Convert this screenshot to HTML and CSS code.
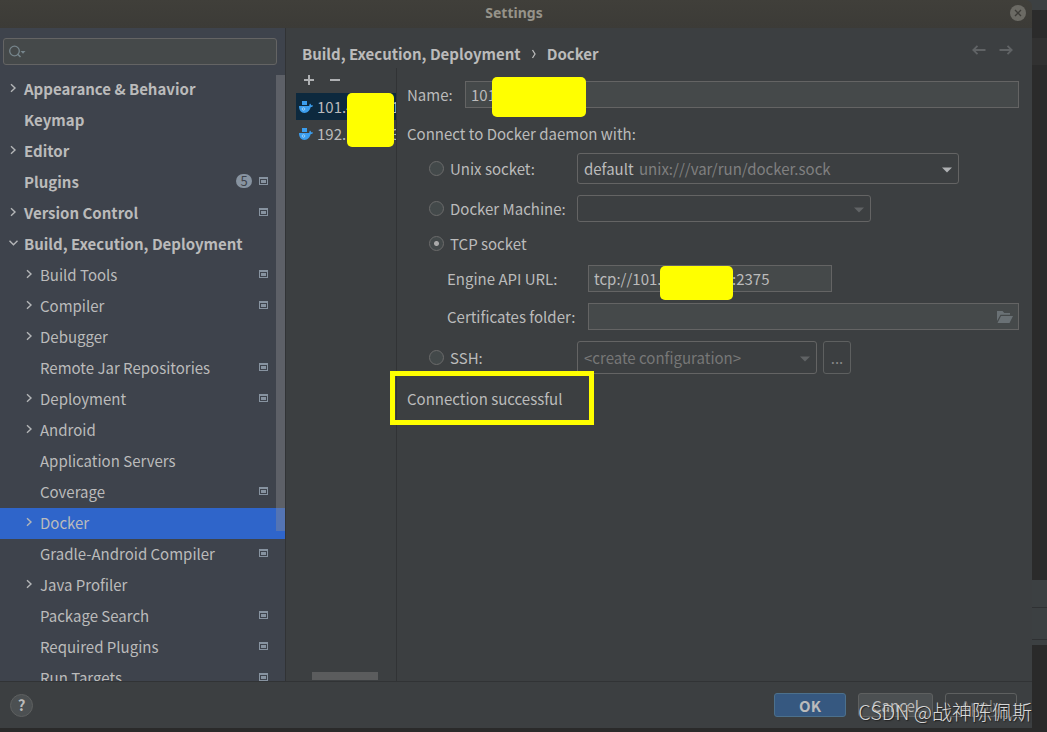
FILE: index.html
```html
<!DOCTYPE html>
<html lang="en">
<head>
<meta charset="utf-8">
<title>Settings</title>
<link rel="stylesheet" href="styles.css">
</head>
<body>
<svg class="defs" aria-hidden="true">
  <symbol id="right" viewBox="0 0 10 10"><path d="M3 1.200 7 5 3 8.800" fill="none" stroke="#b4b6b8" stroke-width="1.400"/></symbol>
  <symbol id="down" viewBox="0 0 10 10"><path d="M1.500 2.800 5.500 6.800 9.500 2.800" fill="none" stroke="#b4b6b8" stroke-width="1.400"/></symbol>
  <symbol id="project" viewBox="0 0 9 8"><path fill="#8793a0" fill-rule="evenodd" d="M0 0h9v8H0zM1 2v5h7V2z"/><path fill="#8793a0" d="M2 3h5v3H2z"/></symbol>
  <symbol id="whale" viewBox="0 0 16 14"><path fill="#3b9ded" d="M4 1h5v4H4zM1 6h10.200c0-1 .2-1.800.8-2.500.7.5 1.100 1.200 1.200 1.900.7-.1 1.300 0 1.800.4-.5 1-1.300 1.400-2.400 1.500C11.800 10.600 9.500 13 6.500 13 3 13 1 10 1 6z"/><circle cx="5.500" cy="9" r="1.300" fill="none" stroke="#b9def8" stroke-width=".7"/></symbol>
</svg>
<main class="dialog">
  <header class="titlebar">
    <h1>Settings</h1>
    <button class="close" aria-label="Close"><svg viewBox="0 0 16 16"><path d="M5 5l6 6M11 5l-6 6" stroke="#3c3b37" stroke-width="1.300"/></svg></button>
  </header>
  <div class="body">
    <nav class="sidebar" aria-label="Settings categories">
      <div class="search">
        <svg viewBox="0 0 18 14" aria-hidden="true"><circle cx="5.500" cy="6" r="4.800" fill="none" stroke="#76858c" stroke-width="1.300"/><path d="M8.500 9l3 3" stroke="#76858c" stroke-width="1.600"/><path d="M11.500 6h5L14 8.700z" fill="#76858c"/></svg>
        <input type="search" aria-label="Search settings">
      </div>
      <ul class="tree">
        <li class="top"><svg class="arrow"><use href="#right"/></svg><a href="#">Appearance &amp; Behavior</a></li>
        <li class="top"><span class="arrow"></span><a href="#">Keymap</a></li>
        <li class="top"><svg class="arrow"><use href="#right"/></svg><a href="#">Editor</a></li>
        <li class="top"><span class="arrow"></span><a href="#">Plugins</a><span class="count">5</span><svg class="project"><use href="#project"/></svg></li>
        <li class="top"><svg class="arrow"><use href="#right"/></svg><a href="#">Version Control</a><svg class="project"><use href="#project"/></svg></li>
        <li class="top"><svg class="arrow"><use href="#down"/></svg><a href="#">Build, Execution, Deployment</a></li>
        <li><svg class="arrow"><use href="#right"/></svg><a href="#">Build Tools</a><svg class="project"><use href="#project"/></svg></li>
        <li><svg class="arrow"><use href="#right"/></svg><a href="#">Compiler</a><svg class="project"><use href="#project"/></svg></li>
        <li><svg class="arrow"><use href="#right"/></svg><a href="#">Debugger</a></li>
        <li><span class="arrow"></span><a href="#">Remote Jar Repositories</a><svg class="project"><use href="#project"/></svg></li>
        <li><svg class="arrow"><use href="#right"/></svg><a href="#">Deployment</a><svg class="project"><use href="#project"/></svg></li>
        <li><svg class="arrow"><use href="#right"/></svg><a href="#">Android</a></li>
        <li><span class="arrow"></span><a href="#">Application Servers</a></li>
        <li><span class="arrow"></span><a href="#">Coverage</a><svg class="project"><use href="#project"/></svg></li>
        <li class="selected"><svg class="arrow"><use href="#right"/></svg><a href="#">Docker</a></li>
        <li><span class="arrow"></span><a href="#">Gradle-Android Compiler</a><svg class="project"><use href="#project"/></svg></li>
        <li><svg class="arrow"><use href="#right"/></svg><a href="#">Java Profiler</a></li>
        <li><span class="arrow"></span><a href="#">Package Search</a><svg class="project"><use href="#project"/></svg></li>
        <li><span class="arrow"></span><a href="#">Required Plugins</a><svg class="project"><use href="#project"/></svg></li>
        <li><span class="arrow"></span><a href="#">Run Targets</a><svg class="project"><use href="#project"/></svg></li>
      </ul>
      <span class="scroll-v"></span>
    </nav>
    <section class="content">
      <div class="crumbs">
        <h2>Build, Execution, Deployment</h2>
        <svg class="sep" viewBox="0 0 6 10"><path d="M1.500 1 4 5 1.500 9" fill="none" stroke="#bbb" stroke-width="1.300"/></svg>
        <h2>Docker</h2>
        <div class="history">
          <button aria-label="Back"><svg viewBox="0 0 14 10"><path d="M13.500 5H1.500M5.500 .8 1.300 5l4.200 4.200" fill="none" stroke="#606365" stroke-width="1.800"/></svg></button>
          <button aria-label="Forward"><svg viewBox="0 0 14 10"><path d="M.5 5h12M8.500.8 12.700 5 8.500 9.200" fill="none" stroke="#606365" stroke-width="1.800"/></svg></button>
        </div>
      </div>
      <div class="panes">
        <div class="servers">
          <div class="tools">
            <button aria-label="Add"><svg viewBox="0 0 10 10"><path d="M5 0v10M0 5h10" stroke="#afb1b3" stroke-width="2"/></svg></button>
            <button aria-label="Remove"><svg viewBox="0 0 10 10"><path d="M0 5h10" stroke="#afb1b3" stroke-width="2"/></svg></button>
          </div>
          <ul class="server-list">
            <li class="active"><svg class="whale"><use href="#whale"/></svg><span>101.4           1</span></li>
            <li><svg class="whale"><use href="#whale"/></svg><span>192.1           3</span></li>
            <li class="mask mask-list"></li>
          </ul>
          <span class="scroll-h"></span>
        </div>
        <form class="form">
          <div class="row name-row">
            <label for="name">Name:</label>
            <div class="field grow"><input id="name" type="text" value="101"><span class="mask mask-name"></span></div>
          </div>
          <p class="lead">Connect to Docker daemon with:</p>
          <div class="options">
            <div class="row">
              <label class="choice"><input type="radio" name="mode">Unix socket:</label>
              <div class="combo unix"><select aria-label="Unix socket"><option>default</option></select><span class="hint">unix:///var/run/docker.sock</span><svg class="caret" viewBox="0 0 10 6"><path d="M0 .5h10L5 5.500z" fill="#afb1b3"/></svg></div>
            </div>
            <div class="row">
              <label class="choice"><input type="radio" name="mode">Docker Machine:</label>
              <div class="combo machine off"><select aria-label="Docker Machine" disabled><option></option></select><svg class="caret" viewBox="0 0 10 6"><path d="M0 .5h10L5 5.500z" fill="#606365"/></svg></div>
            </div>
            <label class="choice tcp"><input type="radio" name="mode" checked>TCP socket</label>
            <div class="row sub">
              <label for="url">Engine API URL:</label>
              <div class="field url"><input id="url" type="text" value="tcp://101.&nbsp;&nbsp;&nbsp;&nbsp;&nbsp;&nbsp;&nbsp;&nbsp;&nbsp;&nbsp;&nbsp;&nbsp;&nbsp;&nbsp;&nbsp;&nbsp;&nbsp;&nbsp;&nbsp;&nbsp;&nbsp;:2375"><span class="mask mask-url"></span></div>
            </div>
            <div class="row sub">
              <label for="cert">Certificates folder:</label>
              <div class="field grow"><input id="cert" type="text"><button class="browse" type="button" aria-label="Browse"><svg viewBox="0 0 16 12"><path fill="#6a7175" d="M0 0h5.500l1.800 2H13v1.800H3.500L0 10z"/><path fill="#6a7175" d="M4 5h12l-3.500 7H.5z"/></svg></button></div>
            </div>
            <div class="row">
              <label class="choice"><input type="radio" name="mode">SSH:</label>
              <div class="combo ssh off"><select aria-label="SSH configuration" disabled><option>&lt;create configuration&gt;</option></select><svg class="caret" viewBox="0 0 10 6"><path d="M0 .5h10L5 5.500z" fill="#606365"/></svg></div>
              <button class="more" type="button">...</button>
            </div>
          </div>
          <p class="status">Connection successful<span class="frame"></span></p>
        </form>
      </div>
    </section>
  </div>
  <footer class="footer">
    <button class="help" aria-label="Help">?</button>
    <button class="btn primary">OK</button>
    <button class="btn cancel">Cancel</button>
    <button class="btn apply" disabled>Apply</button>
  </footer>
</main>
<div class="watermark">CSDN @战神陈佩斯</div>
</body>
</html>
```

FILE: styles.css
```css
* { box-sizing: border-box; margin: 0; padding: 0; }
body {
  height: 100vh;
  padding: 0 15px 4px 0;
  overflow: hidden;
  position: relative;
  background: linear-gradient(#3c4042 0 10px, #2b2b2b 10px 38px, #313131 38px 65px, #2b2b2b 65px 580px, #3c4042 580px 607px, #2f3133 607px 608px, #3c4042 608px 639px, #2f3133 639px 640px, #3c4042 640px 645px, #2a2a2a 645px);
  color: #bbb;
  font: 15px/20px "Noto Sans CJK SC", sans-serif;
}
button, input, select { font: inherit; color: inherit; background: none; border: 0; outline: 0; }
ul { list-style: none; }
a { color: inherit; text-decoration: none; }
svg { display: block; flex: none; }
.defs { position: absolute; width: 0; height: 0; }

.dialog { height: 100%; display: flex; flex-direction: column; background: #3c3f41; border-radius: 0 6px 0 0; overflow: hidden; }
.titlebar { flex: none; height: 28px; display: flex; align-items: center; background: linear-gradient(#403f3a, #3c3b37); padding: 0 6px 2px 18px; }
.titlebar h1 { flex: 1; text-align: center; font: bold 14px/20px "Noto Sans", sans-serif; color: #96938a; }
.close { width: 16px; height: 16px; border-radius: 50%; background: #6b6a64; }
.body { flex: 1; min-height: 0; display: flex; }

.sidebar { width: 286px; flex: none; position: relative; overflow: hidden; background: #3e434c; border-right: 1px solid #313335; padding-top: 10px; }
.search { display: flex; align-items: center; height: 27px; margin: 0 8px 9px 3px; padding-left: 5px; background: #45494a; border: 1px solid #646464; border-radius: 3px; }
.search svg { width: 18px; height: 14px; }
.search input { flex: 1; min-width: 0; }
.tree li { display: flex; align-items: center; height: 31px; padding: 0 17px 3px 24px; }
.tree .top { padding-left: 8px; font-weight: 700; }
.tree a { flex: 1; padding-top: 2px; white-space: nowrap; }
.arrow { width: 10px; height: 10px; margin-right: 6px; flex: none; }
.tree .selected { background: #2f65ca; }
.count { width: 16px; height: 14px; margin-right: 7px; border-radius: 7px; background: #8793a0; color: #3e434c; font-size: 13px; font-weight: 400; line-height: 14px; text-align: center; }
.project { width: 9px; height: 8px; }
.scroll-v { position: absolute; right: 0; top: 47px; bottom: 150px; width: 9px; background: rgba(140, 140, 145, .4); }

.content { flex: 1; min-width: 0; display: flex; flex-direction: column; }
.crumbs { flex: none; height: 40px; display: flex; align-items: center; padding: 12px 19px 0 16px; }
.crumbs h2 { font-size: 15px; font-weight: 700; }
.sep { width: 6px; height: 10px; margin: 0 10px; }
.history { margin: 0 0 8px auto; display: flex; gap: 13px; }
.history svg { width: 14px; height: 10px; }
.panes { flex: 1; min-height: 0; display: flex; }
.servers { width: 111px; flex: none; position: relative; border-right: 1px solid #313335; padding-left: 10px; }
.tools { height: 25px; display: flex; align-items: center; gap: 16px; padding: 0 0 1px 8px; }
.tools svg { width: 10px; height: 10px; }
.server-list { position: relative; }
.server-list li { height: 27px; display: flex; align-items: center; gap: 3px; padding-left: 2px; overflow: hidden; white-space: pre; }
.server-list .active { background: #0d293e; }
.whale { width: 16px; height: 14px; }
.scroll-h { position: absolute; left: 26px; bottom: 1px; width: 66px; height: 8px; background: #5b5c5d; }

.mask, .server-list .mask { position: absolute; background: #ff0; border-radius: 5px; }
.server-list .mask-list { left: 51px; top: 0; width: 47px; height: 54px; padding: 0; }
.mask-name { left: 27px; top: -4px; width: 94px; height: 40px; }
.mask-url { left: 72px; top: 1px; width: 73px; height: 34px; }

.form { flex: 1; min-width: 0; padding: 13px 13px 0 10px; }
.row { display: flex; align-items: center; }
.name-row label { width: 58px; }
.field { position: relative; display: flex; height: 27px; background: #45494a; border: 1px solid #646464; }
.field input { flex: 1; min-width: 0; padding: 0 5px; }
.grow { flex: 1; }
.field .mask { margin: -1px; }
.lead { margin: 12px 0 5px; line-height: 28px; }
.options { display: flex; flex-direction: column; gap: 11px; padding-left: 22px; }
.choice { width: 148px; flex: none; display: flex; align-items: center; gap: 6px; white-space: nowrap; }
.tcp { height: 21px; }
.choice input { appearance: none; width: 15px; height: 15px; flex: none; border: 1px solid #6b6b6b; border-radius: 50%; background: #43494a; }
.choice input:checked { background: radial-gradient(circle, #aaa 0 2px, #43494a 3px); }
.combo { position: relative; display: flex; border: 1px solid #646464; border-radius: 3px; }
.combo select { appearance: none; width: 100%; padding: 0 6px; }
.combo select:disabled { opacity: 1; }
.unix { width: 382px; height: 31px; }
.machine { width: 294px; height: 27px; }
.ssh { width: 240px; height: 33px; }
.off { color: #777; }
.hint { position: absolute; left: 61px; top: 5px; color: #808080; pointer-events: none; }
.caret { position: absolute; right: 6px; top: 50%; margin-top: -2px; width: 10px; height: 6px; pointer-events: none; }
.sub { padding-left: 18px; }
.sub label { width: 141px; flex: none; }
.url { width: 244px; }
.browse { width: 24px; padding-left: 3px; }
.browse svg { width: 16px; height: 12px; }
.more { width: 28px; height: 33px; margin-left: 6px; border: 1px solid #5e6060; border-radius: 3px; color: #888; }
.status { position: relative; margin-top: 11px; line-height: 28px; }
.frame { position: absolute; left: -17px; top: -14px; width: 204px; height: 54px; border: 5px solid #ff0; }

.footer { flex: none; height: 47px; display: flex; align-items: center; gap: 12px; padding: 0 15px 0 10px; border-top: 1px solid #313335; }
.help { width: 23px; height: 23px; margin-right: auto; border: 1px solid #5e6060; border-radius: 50%; background: #4c5052; font-weight: 700; line-height: 20px; }
.btn { width: 72px; height: 24px; border: 1px solid #5e6060; border-radius: 3px; background: #4c5052; line-height: 22px; padding-top: 1px; }
.primary { background: #365880; border-color: #4c708c; font-weight: 700; }
.cancel { width: 75px; }
.apply { background: none; color: #777; }
.watermark { position: absolute; right: 15px; bottom: 5px; font-size: 20px; line-height: 30px; font-weight: 300; color: #d8d8d8; text-shadow: 1px 1px 1px #222; white-space: nowrap; }
```
